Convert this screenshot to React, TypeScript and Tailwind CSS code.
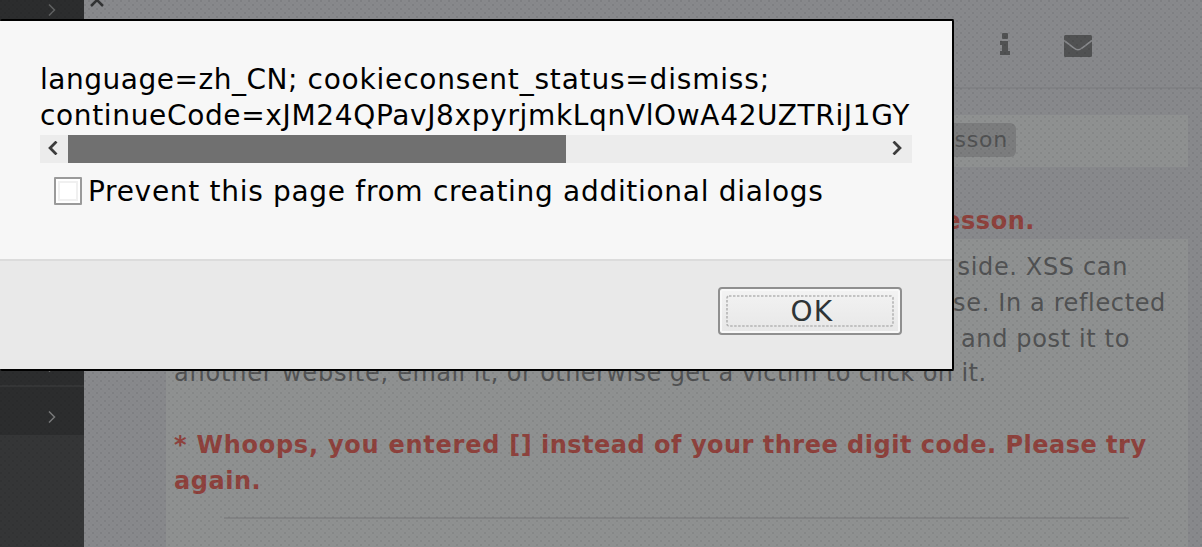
function Chevron({ className, d, w = 2 }: { className: string; d: string; w?: number }) {
  return (
    <svg className={className} viewBox="0 0 12 12" fill="none" stroke="currentColor" strokeWidth={w}>
      <path d={d} />
    </svg>
  );
}

const RIGHT = "M3 0.5L8.5 6L3 11.5";
const LEFT = "M9 0.5L3.5 6L9 11.5";

function Sidebar() {
  return (
    <aside className="flex h-full w-[84px] shrink-0 flex-col bg-[#353637] text-[#777879]">
      <div className="flex h-[387px] flex-col justify-between border-b-2 border-[#353637] bg-[#2c2d2e] pl-[46px] pt-1">
        <Chevron className="size-3 text-[#606162]" d={RIGHT} w={1.5} />
        <Chevron className="mb-[13px] size-3" d={RIGHT} w={1.5} />
      </div>
      <div className="flex h-12 items-start bg-[#2c2d2e] pl-[46px] pt-6">
        <Chevron className="size-3" d={RIGHT} w={1.5} />
      </div>
    </aside>
  );
}

function Page() {
  return (
    <main className="flex min-w-0 flex-1 flex-col bg-[#88898c]">
      <header className="flex h-[89px] shrink-0 items-start border-b-2 border-[#818285] text-[#515253]">
        <svg className="ml-[5px] h-[7px] w-4 text-[#333435]" viewBox="0 0 16 7" fill="none" stroke="currentColor" strokeWidth="2.5">
          <path d="M2 6L8 0L14 6" />
        </svg>
        <svg className="ml-[895px] mt-[33px] h-[22px] w-[10px]" viewBox="0 0 10 22" fill="currentColor">
          <path d="M3 0h4q1 0 1 1v4q0 1-1 1H3q-1 0-1-1V1q0-1 1-1zM0 8h8v10h2v4H0v-4h2v-6H0z" />
        </svg>
        <svg className="ml-[54px] mt-[35px] h-[22px] w-7" viewBox="0 0 28 22">
          <rect width="28" height="22" rx="1.5" fill="currentColor" />
          <path d="M0 5.500l10 7.500q4 3.500 8 0L28 5.500" fill="none" stroke="#88898c" strokeWidth="1.6" />
        </svg>
      </header>
      <div className="ml-[82px] mr-[14px] mt-[26px] flex h-[52px] shrink-0 justify-end bg-[#8f9191] pr-[172px] pt-2">
        <span className="flex h-[34px] items-center rounded-md bg-[#7c7d7e] pb-0.5 pl-2 pr-[8px] text-[22px] tracking-[0.8px] text-[#515253]">
          Restart Lesson
        </span>
      </div>
      <p className="mt-[36px] h-9 shrink-0 whitespace-nowrap pr-[167px] text-right text-[24px] font-bold leading-9 tracking-[0.55px] text-[#8e423d]">
        completed this lesson.
      </p>
      <section className="ml-[82px] mr-[14px] flex flex-1 flex-col bg-[#8f9191] pl-2 pt-[10px] text-[24px] leading-9 tracking-[0.52px] text-[#515253]">
        <div className="h-[106px] w-[992px] text-right tracking-[0.64px]">
          <p className="pr-[38px]">side. XSS can</p>
          <p>se. In a reflected</p>
          <p className="pr-[36px]">and post it to</p>
        </div>
        <p className="whitespace-nowrap">
          <span className="tracking-[0.8px]">another website, </span>
          <span className="tracking-[0.43px]">email it, or otherwise get a victim to click on it.</span>
        </p>
        <p className="mt-9 whitespace-nowrap font-bold text-[#8e423d]">
          <span className="tracking-[0.75px]">* Whoops, you entered </span>
          <span className="tracking-[0.5px]">[] instead of your three digit code. Please try</span>
          <br />
          again.
        </p>
        <hr className="ml-[50px] mr-[59px] mt-[18px] border-t-2 border-[#828384]" />
      </section>
    </main>
  );
}

function Scrim() {
  return (
    <svg className="absolute inset-0 size-full" shapeRendering="crispEdges">
      <defs>
        <pattern id="stipple" width="8" height="8" patternUnits="userSpaceOnUse">
          <path d="M0 0h2v2H0zM4 4h2v2H4z" fill="#000" fillOpacity="0.07" />
          <path d="M4 0h2v2H4zM0 4h2v2H0zM2 2h2v2H2zM6 2h2v2H6zM2 6h2v2H2zM6 6h2v2H6z" fill="#000" fillOpacity="0.015" />
        </pattern>
      </defs>
      <rect width="100%" height="100%" fill="url(#stipple)" />
    </svg>
  );
}

function Dialog() {
  return (
    <div className="absolute left-0 top-[19px] flex h-[352px] w-[954px] flex-col rounded-[2px] border-y-2 border-r-2 border-black bg-[#f7f7f7] text-black">
      <div className="flex h-[238px] shrink-0 flex-col pl-10 pt-[41px] text-[28px] leading-9">
        <p className="whitespace-nowrap">
          <span className="tracking-[0.52px]">language=zh_CN; </span>
          <span className="tracking-[0.81px]">cookieconsent_status=dismiss;</span>
        </p>
        <p className="w-[872px] overflow-hidden whitespace-nowrap tracking-[0.65px]">continueCode=xJM24QPavJ8xpyrjmkLqnVlOwA42UZTRiJ1GY</p>
        <div className="mt-px flex h-7 w-[872px] shrink-0 items-center bg-[#ececec] text-[#3c3c3c]">
          <Chevron className="mb-0.5 ml-[5px] mr-[7px] h-3.5 w-4" d={LEFT} w={2.4} />
          <span className="h-7 w-[498px] bg-[#707070]" />
          <Chevron className="mb-0.5 ml-auto mr-[7px] h-3.5 w-4" d={RIGHT} w={2.4} />
        </div>
        <label className="ml-[14px] mt-[10px] flex h-9 shrink-0 items-center">
          <span className="mr-1.5 flex size-7 items-center justify-center rounded-[1px] border-2 border-[#9a9a9a] bg-white">
            <span className="size-5 border-2 border-[#f0f0f0]" />
          </span>
          <span className="whitespace-nowrap pt-0.5 tracking-[0.7px]">Prevent this page from creating additional dialogs</span>
        </label>
      </div>
      <div className="flex flex-1 items-start justify-end border-t-2 border-[#dcdcdc] bg-[#e9e9e9] pr-[50px] pt-[26px]">
        <button className="relative flex h-12 w-[184px] items-center justify-center rounded-[4px] border-2 border-[#8f8f8f] bg-linear-to-b from-[#f3f3f3] to-[#e7e7e7] pl-1 pt-0.5 text-[28px] tracking-[1.4px] text-[#2e3436] shadow-[inset_0_0_0_2px_#f8f8f8]">
          <svg className="absolute left-1.5 top-1.5 h-8 w-[168px]" viewBox="0 0 168 32" fill="none">
            <rect x="1" y="1" width="166" height="30" rx="2" stroke="#b4b4b4" strokeWidth="1.6" strokeDasharray="2.500 1.500" />
          </svg>
          OK
        </button>
      </div>
    </div>
  );
}

export default function App() {
  return (
    <div className="relative flex h-[547px] w-[1202px] overflow-hidden font-['DejaVu_Sans',sans-serif]">
      <Sidebar />
      <Page />
      <Scrim />
      <Dialog />
    </div>
  );
}
